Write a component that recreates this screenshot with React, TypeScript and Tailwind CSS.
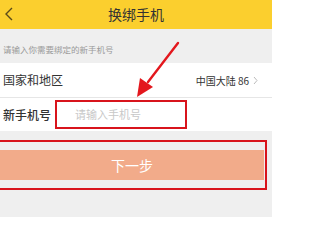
export default function App() {
  return (
    <div
      className="relative w-[272px] h-[217px] overflow-hidden bg-[#efefef]"
      style={{ fontFamily: '"Noto Sans CJK SC", "Noto Sans", sans-serif' }}
    >
      <div className="relative flex h-[29px] items-center justify-center bg-[#fbcf2e]">
        <svg className="absolute left-[4px] top-[7px]" width="10" height="14" viewBox="0 0 10 14">
          <path d="M8 1 L2 7 L8 13" fill="none" stroke="#5a4a1a" strokeWidth="1.4" />
        </svg>
        <span className="text-[14px] text-[#333]">换绑手机</span>
      </div>

      <div className="flex h-[34px] items-end pb-[7px] pl-[3px] text-[8.5px] text-[#9a9a9a]">
        请输入你需要绑定的新手机号
      </div>

      <div className="flex h-[35px] items-center justify-between border-b border-[#e6e6e6] bg-white pl-[3px] pr-[14px]">
        <span className="text-[12px] text-[#333]">国家和地区</span>
        <span className="flex items-center gap-[4px] text-[10px] text-[#333]">
          中国大陆 86
          <svg width="5" height="9" viewBox="0 0 5 9">
            <path d="M1 1 L4 4.5 L1 8" fill="none" stroke="#bbb" strokeWidth="1" />
          </svg>
        </span>
      </div>

      <div className="flex h-[33px] items-center bg-white pl-[3px]">
        <span className="w-[52px] text-[12px] font-medium text-[#333]">新手机号</span>
        <div className="flex h-[29px] w-[132px] items-center border-2 border-[#d8141c] pl-[18px] text-[11px] text-[#c8c8c8]">
          请输入手机号
        </div>
      </div>

      <div className="mt-[9px] w-[267px] border-y-2 border-r-2 border-[#d8141c] py-[8px] pr-[1px]">
        <div className="flex h-[30px] items-center justify-center bg-[#f2ab8a] text-[14px] text-white">
          下一步
        </div>
      </div>

      <svg className="pointer-events-none absolute left-0 top-0" width="272" height="217" viewBox="0 0 272 217">
        <line x1="178" y1="43" x2="148" y2="82" stroke="#e3171d" strokeWidth="2.4" strokeLinecap="round" />
        <polygon points="137,97 140,78 153,87" fill="#e3171d" />
      </svg>
    </div>
  );
}
